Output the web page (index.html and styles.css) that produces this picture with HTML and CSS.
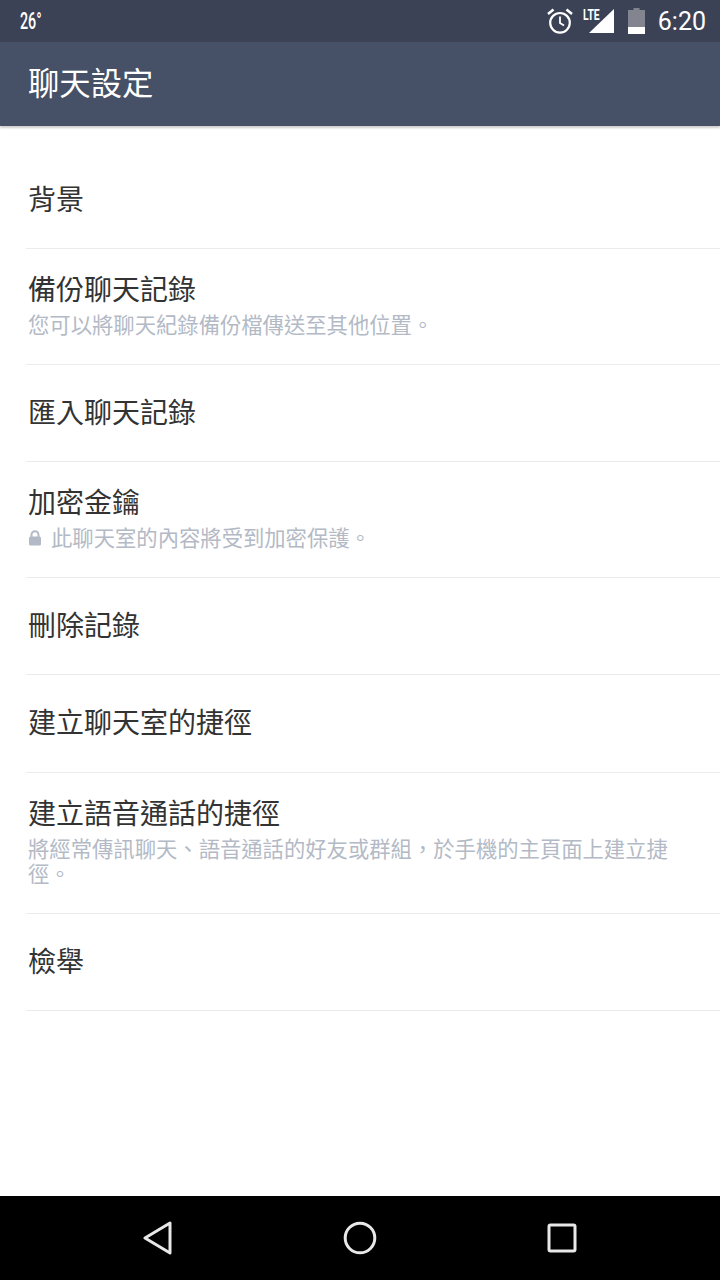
FILE: index.html
```html
<!DOCTYPE html>
<html lang="zh-Hant">

<head>
    <meta charset="UTF-8">
    <meta name="viewport" content="width=device-width, initial-scale=1.0">
    <title>聊天設定</title>
    <link rel="stylesheet" href="styles.css">
</head>

<body>
    <div class="phone">
        <!-- Status bar -->
        <div class="status-bar">
            <span class="temp">26°</span>
            <div class="status-icons">
                <svg class="icon-alarm" width="26" height="26" viewBox="0 0 26 26">
                    <circle cx="13" cy="14.800" r="9.800" fill="none" stroke="#fff" stroke-width="2.200"/>
                    <path d="M13 8.500V15L17 17.500" fill="none" stroke="#fff" stroke-width="1.800"/>
                    <path d="M1 6L6.500 1.500M25 6L19.500 1.500" fill="none" stroke="#fff" stroke-width="2.600"/>
                </svg>
                <div class="signal">
                    <span class="lte">LTE</span>
                    <svg width="25" height="26" viewBox="0 0 25 26">
                        <path d="M25 1V25H0Z" fill="#fff"/>
                    </svg>
                </div>
                <svg class="icon-battery" width="17" height="26" viewBox="0 0 17 26">
                    <path d="M5.500 0H11.500V2H17V26H0V2H5.500Z" fill="#82858f"/>
                    <path d="M0 19H17V26H0Z" fill="#fff"/>
                </svg>
                <span class="clock">6:20</span>
            </div>
        </div>

        <!-- Header -->
        <header class="app-bar">聊天設定</header>

        <!-- Settings list -->
        <main class="settings-list">
            <div class="row">
                <div class="row-title">背景</div>
            </div>
            <div class="row has-sub">
                <div class="row-title">備份聊天記錄</div>
                <div class="row-sub">您可以將聊天紀錄備份檔傳送至其他位置。</div>
            </div>
            <div class="row">
                <div class="row-title">匯入聊天記錄</div>
            </div>
            <div class="row has-sub">
                <div class="row-title">加密金鑰</div>
                <div class="row-sub">
                    <svg class="icon-lock" width="14" height="16" viewBox="0 0 14 16">
                        <path d="M3.500 7V4.800a3.500 3.500 0 0 1 7 0V7" fill="none" stroke="#b3bac6" stroke-width="2"/>
                        <rect x="1" y="6.500" width="12" height="9" rx="1.500" fill="#b3bac6"/>
                    </svg>此聊天室的內容將受到加密保護。
                </div>
            </div>
            <div class="row">
                <div class="row-title">刪除記錄</div>
            </div>
            <div class="row">
                <div class="row-title">建立聊天室的捷徑</div>
            </div>
            <div class="row has-sub">
                <div class="row-title">建立語音通話的捷徑</div>
                <div class="row-sub">將經常傳訊聊天、語音通話的好友或群組&#65292;於手機的主頁面上建立捷徑。</div>
            </div>
            <div class="row">
                <div class="row-title">檢舉</div>
            </div>
        </main>

        <!-- Navigation bar -->
        <nav class="nav-bar">
            <svg width="30" height="34" viewBox="0 0 30 34">
                <path d="M27 2V32L2 17Z" fill="none" stroke="#e8e8e8" stroke-width="3" stroke-linejoin="round"/>
            </svg>
            <svg width="34" height="34" viewBox="0 0 34 34">
                <circle cx="17" cy="17" r="14.800" fill="none" stroke="#e8e8e8" stroke-width="3"/>
            </svg>
            <svg width="30" height="30" viewBox="0 0 30 30">
                <rect x="2" y="2" width="26" height="26" rx="1.500" fill="none" stroke="#e8e8e8" stroke-width="3"/>
            </svg>
        </nav>
    </div>
</body>

</html>
```

FILE: styles.css
```css
/* Page */

body {
    margin: 0;
    font-family: 'Noto Sans CJK TC', 'Noto Sans', sans-serif;
    background-color: #fff;
}

.phone {
    width: 720px;
    height: 1280px;
    display: flex;
    flex-direction: column;
    overflow: hidden;
}

/* Status bar */

.status-bar {
    height: 42px;
    flex-shrink: 0;
    display: flex;
    justify-content: space-between;
    align-items: center;
    padding: 0 14px 0 20px;
    background-color: #3c4256;
    color: #fff;
}

.temp {
    font-family: 'Roboto', sans-serif;
    font-size: 23px;
    font-weight: 500;
    transform: scaleX(0.62);
    transform-origin: left center;
}

.status-icons {
    display: flex;
    align-items: center;
}

.signal {
    position: relative;
    width: 25px;
    height: 26px;
    margin-left: 16px;
}

.lte {
    position: absolute;
    top: 0;
    left: -6px;
    font-family: 'Roboto', sans-serif;
    font-size: 14px;
    font-weight: 700;
    line-height: 14px;
    transform: scaleX(0.74);
    transform-origin: left top;
}

.icon-battery {
    margin-left: 14px;
}

.clock {
    margin-left: 13px;
    font-family: 'Roboto', sans-serif;
    font-size: 25px;
}

/* Header */

.app-bar {
    height: 84px;
    flex-shrink: 0;
    padding-left: 28px;
    background-color: #465066;
    color: #fff;
    font-size: 31.33px;
    line-height: 80px;
    box-shadow: 0 2px 2px rgba(0, 0, 0, 0.2);
}

/* Settings list */

.settings-list {
    flex: 1;
    padding-top: 25.8px;
}

.row {
    margin-left: 26px;
    padding: 28px 0 32.2px 2px;
    border-bottom: 1px solid #ececee;
}

.row.has-sub {
    padding: 21px 50px 28px 2px;
}

.row-title {
    font-size: 28px;
    line-height: 36px;
    color: #333;
}

.row-sub {
    margin-top: 5px;
    font-size: 21.33px;
    line-height: 25px;
    color: #b3bac6;
}

.icon-lock {
    margin-right: 9px;
}

/* Navigation bar */

.nav-bar {
    height: 84px;
    flex-shrink: 0;
    display: flex;
    justify-content: center;
    align-items: center;
    gap: 170px;
    background-color: #000;
}
```
